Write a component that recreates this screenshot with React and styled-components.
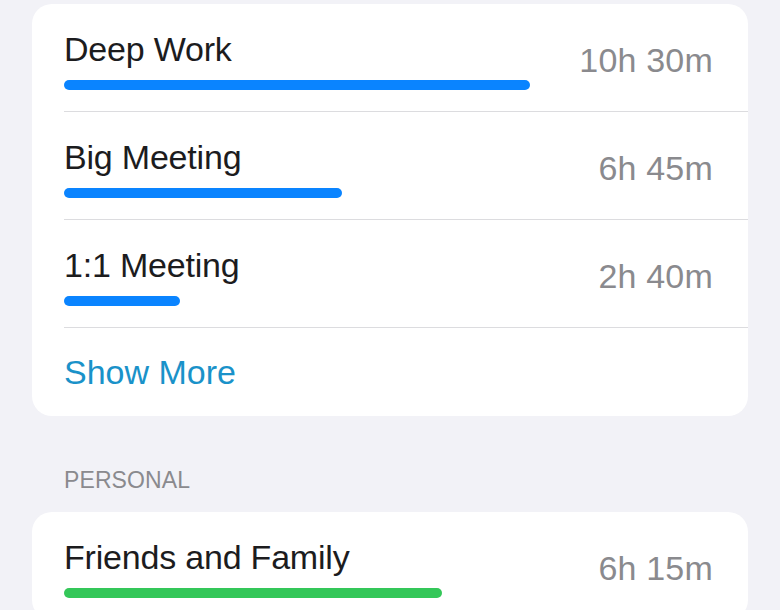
import styled, { createGlobalStyle } from 'styled-components';

const GlobalStyle = createGlobalStyle`
    body {
        margin: 0;
        background: #f2f2f7;
        font-family: 'Liberation Sans', Arial, sans-serif;
        -webkit-font-smoothing: antialiased;
    }
`;

const Page = styled.div`
    padding: 4px 32px 0;
`;

const Card = styled.div`
    background: #fff;
    border-radius: 20px;
    overflow: hidden;
`;

const Row = styled.div`
    display: flex;
    align-items: center;
    justify-content: space-between;
    margin-left: 32px;
    padding: 25px 35px 21px 0;
    border-bottom: 1px solid #dcdcdf;
`;

const Info = styled.div`
    display: flex;
    flex-direction: column;
    gap: 11px;
`;

const Title = styled.div`
    font-size: 34px;
    line-height: 40px;
    letter-spacing: -0.2px;
    color: #1c1c1e;
`;

const Bar = styled.div`
    height: 10px;
    border-radius: 5px;
    background: ${(props) => props.color};
`;

const Time = styled.div`
    font-size: 34px;
    line-height: 40px;
    letter-spacing: 0.2px;
    color: #8a8a8e;
`;

const ShowMore = styled.div`
    margin-left: 32px;
    height: 88px;
    display: flex;
    align-items: center;
    font-size: 34px;
    line-height: 40px;
    color: #1a92c9;
`;

const SectionHeader = styled.div`
    margin: 50px 0 18px;
    padding-left: 32px;
    font-size: 23px;
    line-height: 28px;
    letter-spacing: 0.1px;
    color: #8a8a8e;
`;

const BLUE = '#0a84ff';
const GREEN = '#34c759';

const work = [
    { name: 'Deep Work', time: '10h 30m', width: 466 },
    { name: 'Big Meeting', time: '6h 45m', width: 278 },
    { name: '1:1 Meeting', time: '2h 40m', width: 116 },
];

const personal = [{ name: 'Friends and Family', time: '6h 15m', width: 378 }];

const ActivityRow = ({ item, color }) => (
    <Row>
        <Info>
            <Title>{item.name}</Title>
            <Bar color={color} style={{ width: item.width }} />
        </Info>
        <Time>{item.time}</Time>
    </Row>
);

export default function App() {
    return (
        <>
            <GlobalStyle />
            <Page>
                <Card>
                    {work.map((item) => (
                        <ActivityRow key={item.name} item={item} color={BLUE} />
                    ))}
                    <ShowMore>Show More</ShowMore>
                </Card>
                <SectionHeader>PERSONAL</SectionHeader>
                <Card>
                    {personal.map((item) => (
                        <ActivityRow key={item.name} item={item} color={GREEN} />
                    ))}
                </Card>
            </Page>
        </>
    );
}
